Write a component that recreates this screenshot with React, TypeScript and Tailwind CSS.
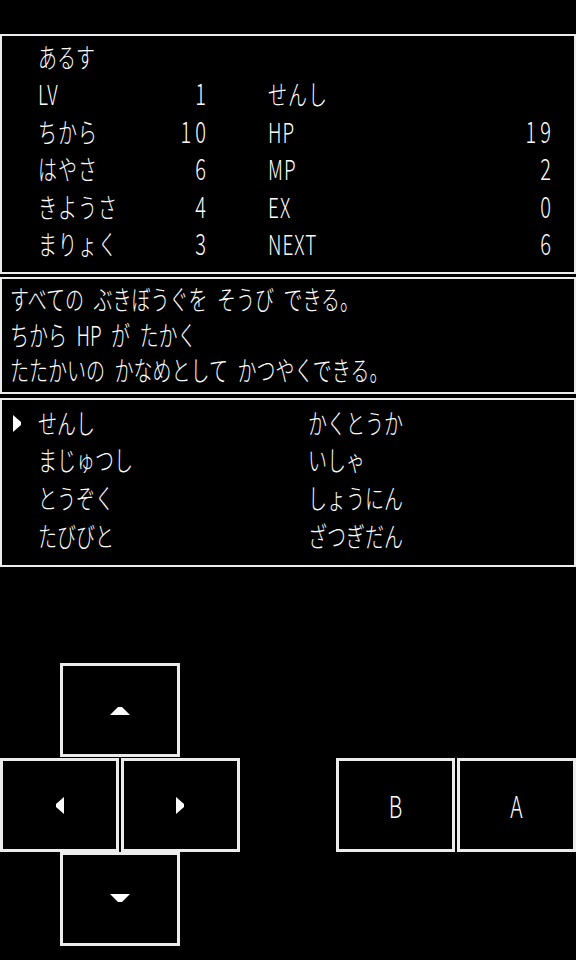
const font = "font-['Noto_Sans_CJK_JP',sans-serif]";

const stats: [string, string, string, string][] = [
  ["LV", "1", "せんし", ""],
  ["ちから", "10", "HP", "19"],
  ["はやさ", "6", "MP", "2"],
  ["きようさ", "4", "EX", "0"],
  ["まりょく", "3", "NEXT", "6"],
];

const jobs: [string, string][] = [
  ["せんし", "かくとうか"],
  ["まじゅつし", "いしゃ"],
  ["とうぞく", "しょうにん"],
  ["たびびと", "ざつぎだん"],
];

const T = ({ children }: { children: React.ReactNode }) => (
  <span className="inline-block leading-none scale-y-[1.45] whitespace-pre">{children}</span>
);

const Arrow = ({ dir }: { dir: "up" | "down" | "left" | "right" }) => {
  if (dir === "up" || dir === "down") {
    return (
      <svg width="20" height="10" viewBox="0 0 20 10">
        <polygon
          points={dir === "up" ? "0,10 8,2 12,2 20,10" : "0,0 20,0 12,8 8,8"}
          fill="#fff"
        />
      </svg>
    );
  }
  return (
    <svg width="9" height="17" viewBox="0 0 9 17">
      <polygon
        points={dir === "left" ? "9,0 9,17 1,10 1,7" : "0,0 0,17 8,10 8,7"}
        fill="#fff"
      />
    </svg>
  );
};

const Pad = ({ className, children }: { className: string; children: React.ReactNode }) => (
  <div
    className={`h-[94px] border-[3px] border-[#ececec] flex items-center justify-center ${className}`}
  >
    {children}
  </div>
);

export default function App() {
  return (
    <div className={`w-[576px] h-[960px] bg-black text-white text-[19px] font-light ${font} overflow-hidden`}>
      <div className="h-[34px]" />

      {/* status */}
      <div className="h-[240px] border-2 border-[#ececec] pt-[1px]">
        <div className="flex h-[37.5px] items-center pl-[36px]">
          <T>あるす</T>
        </div>
        {stats.map(([a, b, c, d]) => (
          <div key={a} className="flex h-[37.5px] items-center pl-[36px]">
            <div className="w-[120px] tracking-[1px]">
              <T>{a}</T>
            </div>
            <div className="w-[52px] text-right text-[20px] tracking-[4px] -mr-[4px]">
              <T>{b}</T>
            </div>
            <div className="w-[62px]" />
            <div className="w-[160px] tracking-[1px]">
              <T>{c}</T>
            </div>
            <div className="w-[127px] text-right text-[20px] tracking-[4px] -mr-[4px]">
              <T>{d}</T>
            </div>
          </div>
        ))}
      </div>

      {/* description */}
      <div className="mt-[3px] h-[117px] border-2 border-[#ececec] pt-[1px] pl-[8px]">
        <div className="h-[35.5px] flex items-center">
          <T>{"すべての\u2002ぶきぼうぐを\u2002そうび\u2002できる。"}</T>
        </div>
        <div className="h-[35.5px] flex items-center">
          <T>{"ちから\u2002HP\u2002が\u2002たかく"}</T>
        </div>
        <div className="h-[35.5px] flex items-center">
          <T>{"たたかいの\u2002かなめとして\u2002かつやくできる。"}</T>
        </div>
      </div>

      {/* job list */}
      <div className="mt-[4px] h-[169px] border-2 border-[#ececec] pt-[3px] pl-[11px]">
        {jobs.map(([l, r], i) => (
          <div key={l} className="flex h-[37.7px] items-center">
            <div className="w-[25px] flex items-center pt-[3px]">{i === 0 && <Arrow dir="right" />}</div>
            <div className="w-[270px]">
              <T>{l}</T>
            </div>
            <div>
              <T>{r}</T>
            </div>
          </div>
        ))}
      </div>

      {/* controls */}
      <div className="mt-[96px]">
        <Pad className="ml-[60px] w-[120px]">
          <Arrow dir="up" />
        </Pad>
        <div className="mt-[1px] flex justify-between">
          <div className="flex gap-[2px]">
            <Pad className="w-[119px]">
              <Arrow dir="left" />
            </Pad>
            <Pad className="w-[119px]">
              <Arrow dir="right" />
            </Pad>
          </div>
          <div className="flex gap-[2px]">
            <Pad className="w-[119px] text-[21px]">
              <T>B</T>
            </Pad>
            <Pad className="w-[119px] text-[21px]">
              <T>A</T>
            </Pad>
          </div>
        </div>
        <Pad className="ml-[60px] w-[120px]">
          <Arrow dir="down" />
        </Pad>
      </div>
    </div>
  );
}
